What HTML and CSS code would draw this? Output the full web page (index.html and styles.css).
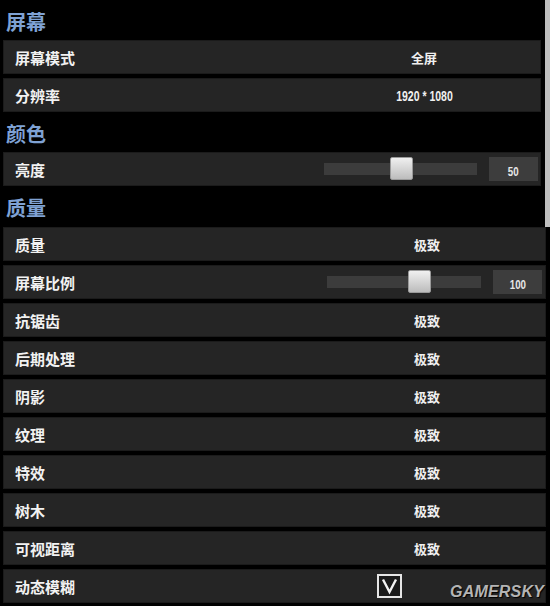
FILE: index.html
```html
<!DOCTYPE html>
<html lang="zh-CN">

<head>
    <meta charset="UTF-8">
    <meta name="viewport" content="width=device-width, initial-scale=1.0">
    <title>画面设置</title>
    <link rel="stylesheet" href="styles.css">
</head>

<body>
    <!-- 上半部分：带滚动条 -->
    <div class="top-area">
        <div class="list">
            <div class="group-title first">屏幕</div>
            <div class="row">
                <span class="label">屏幕模式</span>
                <span class="value">全屏</span>
            </div>
            <div class="row">
                <span class="label">分辨率</span>
                <span class="value"><span class="num">1920 * 1080</span></span>
            </div>

            <div class="group-title">颜色</div>
            <div class="row slider-row">
                <span class="label">亮度</span>
                <div class="track">
                    <div class="thumb" style="left: 50%;"></div>
                </div>
                <span class="num-box"><span class="num">50</span></span>
            </div>

            <div class="group-title">质量</div>
        </div>
        <div class="scrollbar"></div>
    </div>

    <!-- 质量设置 -->
    <div class="list wide">
        <div class="row">
            <span class="label">质量</span>
            <span class="value">极致</span>
        </div>
        <div class="row slider-row">
            <span class="label">屏幕比例</span>
            <div class="track">
                <div class="thumb" style="left: 60%;"></div>
            </div>
            <span class="num-box"><span class="num">100</span></span>
        </div>
        <div class="row">
            <span class="label">抗锯齿</span>
            <span class="value">极致</span>
        </div>
        <div class="row">
            <span class="label">后期处理</span>
            <span class="value">极致</span>
        </div>
        <div class="row">
            <span class="label">阴影</span>
            <span class="value">极致</span>
        </div>
        <div class="row">
            <span class="label">纹理</span>
            <span class="value">极致</span>
        </div>
        <div class="row">
            <span class="label">特效</span>
            <span class="value">极致</span>
        </div>
        <div class="row">
            <span class="label">树木</span>
            <span class="value">极致</span>
        </div>
        <div class="row">
            <span class="label">可视距离</span>
            <span class="value">极致</span>
        </div>
        <div class="row">
            <span class="label">动态模糊</span>
            <span class="checkbox">
                <svg viewBox="0 0 25 24">
                    <rect x="1" y="1" width="23" height="22" fill="#1a1a1a" stroke="#e6e6e6" stroke-width="2"></rect>
                    <path d="M6 5.5 L12.5 18 L19 5.5" fill="none" stroke="#f2f2f2" stroke-width="2.4" stroke-linejoin="miter"></path>
                </svg>
            </span>
        </div>
    </div>

    <div class="watermark">GAMERSKY</div>
</body>

</html>
```

FILE: styles.css
```css
/* 页面基础 */
body {
    margin: 0;
    padding: 0;
    width: 550px;
    height: 606px;
    background: #000;
    font-family: "Noto Sans CJK SC", "Noto Sans", sans-serif;
    color: #efefef;
    position: relative;
    overflow: hidden;
}

/* 上半部分 */
.top-area {
    display: flex;
    height: 227px;
}

.list {
    width: 538px;
    padding-left: 3px;
}

.list.wide {
    width: 543px;
}

.scrollbar {
    width: 5px;
    height: 227px;
    margin-left: 4px;
    background: #bfbfbf;
}

/* 分组标题 */
.group-title {
    height: 36px;
    box-sizing: border-box;
    padding: 8px 0 0 3px;
    font-size: 20px;
    line-height: 20px;
    font-weight: bold;
    color: #7fa2d4;
}

.group-title.first {
    margin-top: 4px;
}

/* 设置行 */
.row {
    height: 34px;
    margin-bottom: 4px;
    box-sizing: border-box;
    background: #252525;
    border: 1px solid #1b1b1b;
    display: grid;
    grid-template-columns: 359px 100px 1fr;
    align-items: center;
    padding-left: 11px;
}

.wide .row {
    grid-template-columns: 362px 100px 1fr;
}

.label {
    font-size: 15px;
    font-weight: bold;
    color: #f2f2f2;
}

.value {
    font-size: 13px;
    font-weight: bold;
    text-align: center;
    color: #f0f0f0;
}

/* 窄体数字 */
.num {
    display: inline-block;
    font-family: "Liberation Sans", Arial, sans-serif;
    font-weight: bold;
    font-size: 15px;
    transform: scaleX(0.7);
    white-space: nowrap;
}

/* 滑条 */
.slider-row {
    grid-template-columns: 297px 153px 49px;
    column-gap: 12px;
}

.wide .slider-row {
    grid-template-columns: 300px 154px 49px;
}

.track {
    height: 12px;
    background: #3c3c3c;
    position: relative;
}

.thumb {
    position: absolute;
    top: -6px;
    width: 23px;
    height: 23px;
    margin-left: -11px;
    box-sizing: border-box;
    border: 1px solid #9a9a9a;
    border-radius: 2px;
    background: linear-gradient(#f0f0f0, #bcbcbc);
}

.num-box {
    height: 24px;
    line-height: 24px;
    background: #3d3d3d;
    text-align: center;
    color: #e6e6e6;
}

.num-box .num {
    font-size: 13px;
    transform: scaleX(0.75);
}

/* 复选框 */
.checkbox {
    width: 25px;
    height: 24px;
    display: flex;
}

.checkbox svg {
    width: 25px;
    height: 24px;
}

/* 水印 */
.watermark {
    position: absolute;
    left: 450px;
    top: 583px;
    font-family: "Liberation Sans", Arial, sans-serif;
    font-size: 16px;
    font-weight: bold;
    font-style: italic;
    letter-spacing: 0.2px;
    color: #b4b4b4;
    text-shadow: 1px 1px 1px #000;
}
```
